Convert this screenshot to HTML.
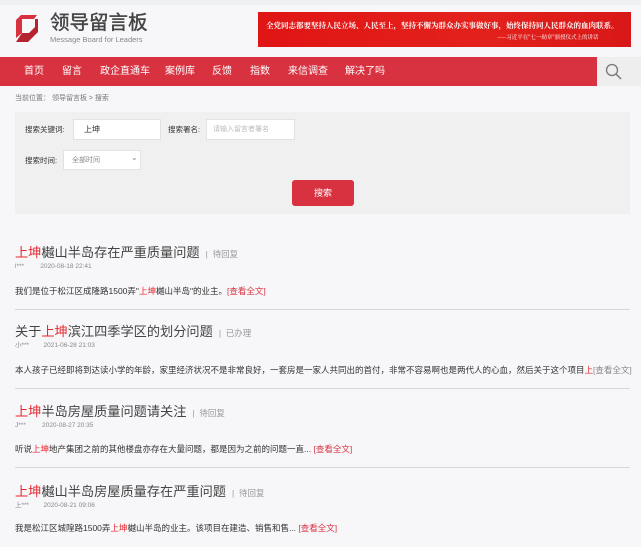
<!DOCTYPE html>
<html><head><meta charset="utf-8"><style>
*{margin:0;padding:0;box-sizing:border-box}
body{width:641px;height:547px;overflow:hidden;background:#f7f6f9;font-family:"Liberation Sans","Noto Sans CJK SC",sans-serif;position:relative;color:#333}
.a{position:absolute;white-space:nowrap;line-height:1}
.r{color:#e8262d}
.nav{position:absolute;left:0;top:57px;width:641px;height:29px;background:#d83140}
.nav span{position:absolute;top:10px;font-size:10px;color:#fff;line-height:1}
.t{font-size:13.2px;color:#444}
.st{font-size:8.5px;color:#999}
.m{font-size:6.5px;color:#888}
.b{font-size:8.5px;color:#333}
.lk{color:#d83140}
.hr{position:absolute;left:15px;width:615px;height:1px;background:#d6d6d6}
</style></head><body>
<div class="a" style="left:0;top:0;width:641px;height:5px;background:#eef0f4"></div>
<svg class="a" style="left:16px;top:15px" width="22" height="28" viewBox="0 0 22 28"><path d="M0 5L5 0H21L18 4H6V18L0 23Z" fill="#d83140"/><path d="M6 18H13L19 12V4H22V17L12 27H0Z" fill="#b52331"/></svg>
<div class="a" style="left:50px;top:14px;font-size:19.5px;color:#444;-webkit-text-stroke:0.4px #444">领导留言板</div>
<div class="a" style="left:50px;top:36px;font-size:7.5px;color:#888">Message Board for Leaders</div>
<div class="a" style="left:258px;top:12px;width:373px;height:35px;background:linear-gradient(90deg,#e01515,#e3211c 60%,#d81818)"></div>
<div class="a" style="left:266px;top:22px;font-size:7.5px;color:#fff;font-weight:bold;font-family:'Noto Serif CJK SC',serif">全党同志都要坚持人民立场、人民至上，坚持不懈为群众办实事做好事，始终保持同人民群众的血肉联系。</div>
<div class="a" style="left:497px;top:35px;font-size:5.5px;color:#fff;font-family:'Noto Serif CJK SC',serif">——习近平在"七一勋章"颁授仪式上的讲话</div>
<div class="nav">
<span style="left:24px">首页</span><span style="left:62px">留言</span><span style="left:100px">政企直通车</span><span style="left:165px">案例库</span><span style="left:212px">反馈</span><span style="left:250px">指数</span><span style="left:288px">来信调查</span><span style="left:345px">解决了吗</span>
</div>
<div class="a" style="left:597px;top:57px;width:44px;height:29px;background:#eeeeee"></div>
<svg class="a" style="left:605px;top:63px" width="18" height="18" viewBox="0 0 18 18"><circle cx="7" cy="7" r="5.5" fill="none" stroke="#777" stroke-width="1.3"/><path d="M11 11L16 16" stroke="#777" stroke-width="1.5"/></svg>
<div class="a" style="left:15px;top:95px;font-size:7px;color:#777">当前位置： 领导留言板 &gt; 搜索</div>
<div class="a" style="left:15px;top:112px;width:615px;height:102px;background:#f0f0f0"></div>
<div class="a" style="left:25px;top:126px;font-size:7.5px;color:#333">搜索关键词:</div>
<div class="a" style="left:73px;top:119px;width:88px;height:21px;background:#fff;border:1px solid #e2e2e2"></div>
<div class="a" style="left:84px;top:126px;font-size:8px;color:#333">上坤</div>
<div class="a" style="left:168px;top:126px;font-size:7.5px;color:#333">搜索署名:</div>
<div class="a" style="left:206px;top:119px;width:89px;height:21px;background:#fff;border:1px solid #e2e2e2"></div>
<div class="a" style="left:213px;top:126px;font-size:7px;color:#bbb">请输入留言者署名</div>
<div class="a" style="left:25px;top:157px;font-size:7.5px;color:#333">搜索时间:</div>
<div class="a" style="left:63px;top:150px;width:78px;height:20px;background:#fff;border:1px solid #e2e2e2"></div>
<div class="a" style="left:72px;top:157px;font-size:7px;color:#888">全部时间</div>
<div class="a" style="left:131px;top:154px;font-size:8px;color:#888">⌄</div>
<div class="a" style="left:292px;top:180px;width:62px;height:26px;background:#d83140;border-radius:3px;color:#fff;font-size:9px;text-align:center;line-height:26px">搜索</div>

<div class="a t" style="left:15px;top:246px"><span class="r">上坤</span>樾山半岛存在严重质量问题 <span class="st">&nbsp;|&nbsp; 待回复</span></div>
<div class="a m" style="left:15px;top:264px">l***&nbsp;&nbsp;&nbsp;&nbsp;&nbsp;&nbsp;&nbsp;&nbsp;&nbsp;2020-08-18 22:41</div>
<div class="a b" style="left:15px;top:287px">我们是位于松江区成隆路1500弄"<span class="r">上坤</span>樾山半岛"的业主。<span class="lk">[查看全文]</span></div>
<div class="hr" style="top:309px"></div>

<div class="a t" style="left:15px;top:325px">关于<span class="r">上坤</span>滨江四季学区的划分问题 <span class="st">&nbsp;|&nbsp; 已办理</span></div>
<div class="a m" style="left:15px;top:343px">小***&nbsp;&nbsp;&nbsp;&nbsp;&nbsp;&nbsp;&nbsp;&nbsp;2021-06-28 21:03</div>
<div class="a b" style="left:15px;top:366px">本人孩子已经即将到达读小学的年龄，家里经济状况不是非常良好，一套房是一家人共同出的首付，非常不容易啊也是两代人的心血，然后关于这个项目<span class="r">上</span><span style="color:#888">[查看全文]</span></div>
<div class="hr" style="top:388px"></div>

<div class="a t" style="left:15px;top:405px"><span class="r">上坤</span>半岛房屋质量问题请关注 <span class="st">&nbsp;|&nbsp; 待回复</span></div>
<div class="a m" style="left:15px;top:423px">J***&nbsp;&nbsp;&nbsp;&nbsp;&nbsp;&nbsp;&nbsp;&nbsp;&nbsp;2020-08-27 20:35</div>
<div class="a b" style="left:15px;top:445px">听说<span class="r">上坤</span>地产集团之前的其他楼盘亦存在大量问题，都是因为之前的问题一直... <span class="lk">[查看全文]</span></div>
<div class="hr" style="top:467px"></div>

<div class="a t" style="left:15px;top:485px"><span class="r">上坤</span>樾山半岛房屋质量存在严重问题 <span class="st">&nbsp;|&nbsp; 待回复</span></div>
<div class="a m" style="left:15px;top:503px">上***&nbsp;&nbsp;&nbsp;&nbsp;&nbsp;&nbsp;&nbsp;&nbsp;2020-08-21 09:06</div>
<div class="a b" style="left:15px;top:524px">我是松江区城隍路1500弄<span class="r">上坤</span>樾山半岛的业主。该项目在建造、销售和售... <span class="lk">[查看全文]</span></div>
</body></html>
